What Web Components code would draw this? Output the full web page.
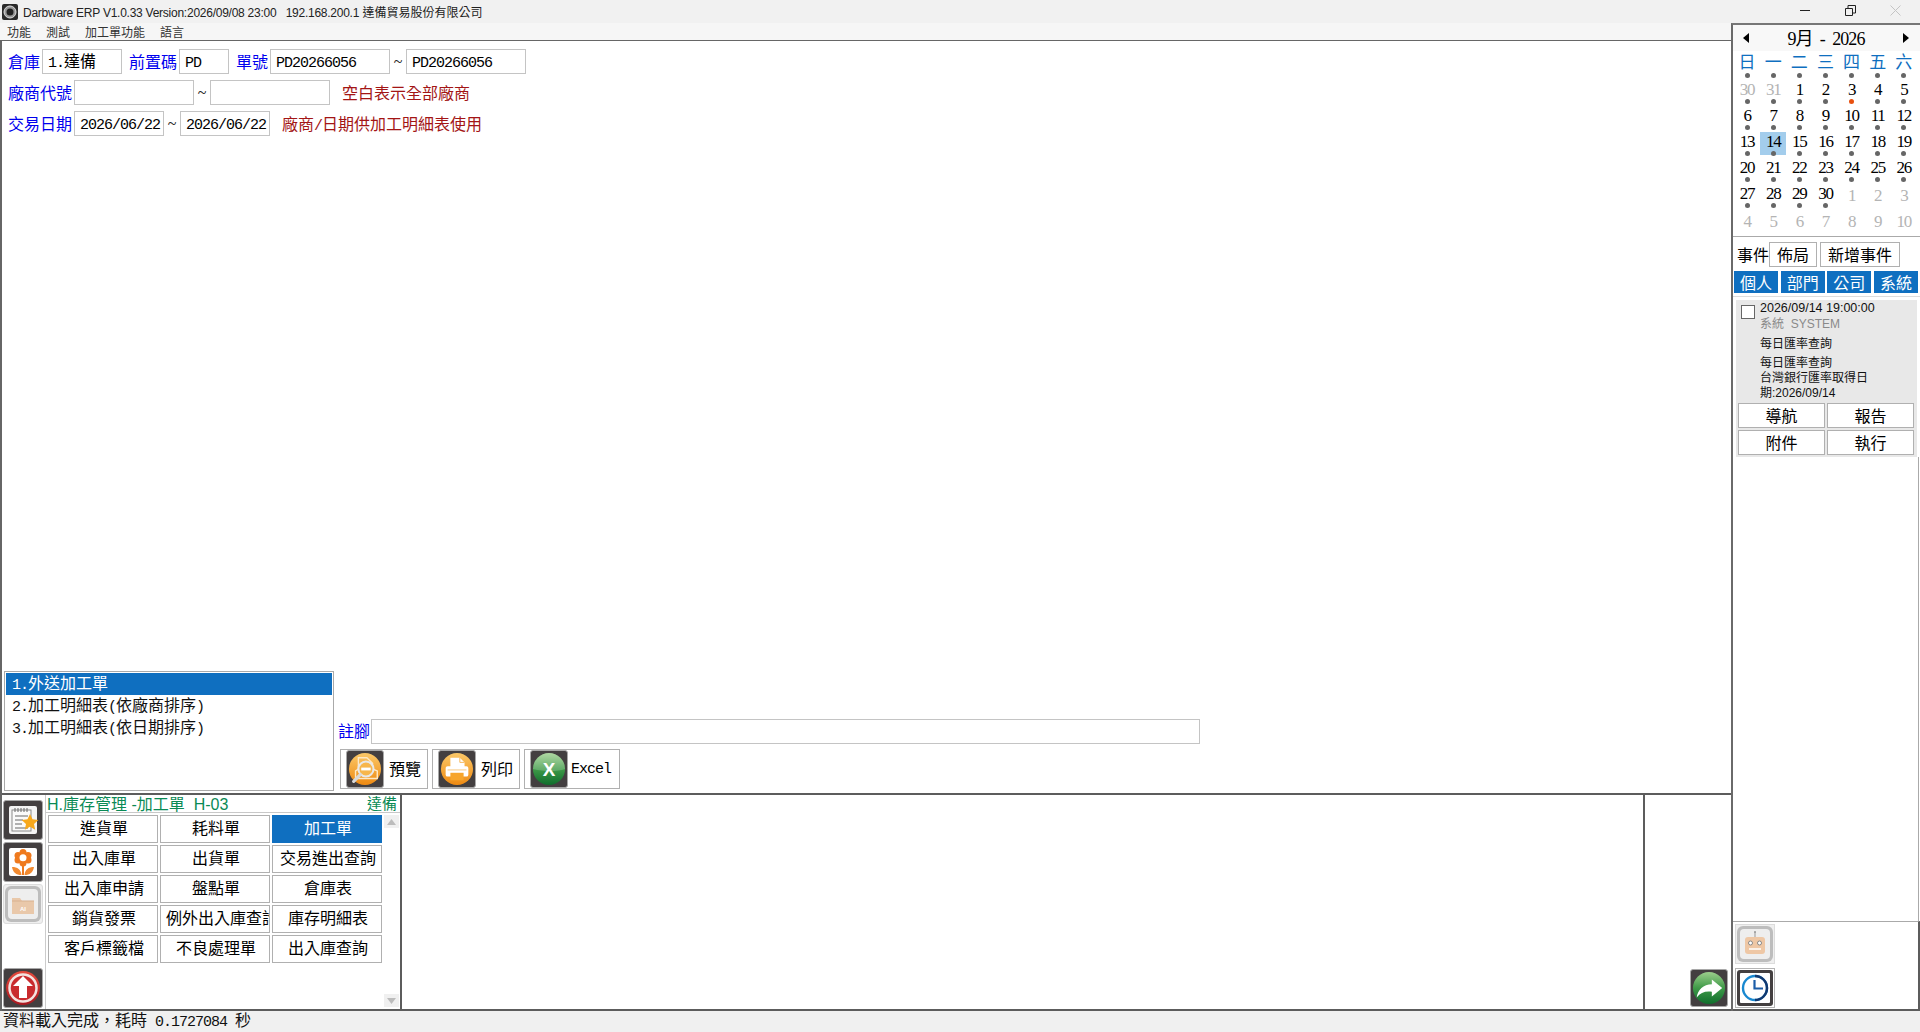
<!DOCTYPE html>
<html>
<head>
<meta charset="utf-8">
<style>
  html, body { margin: 0; padding: 0; height: 100%; background: #fff; overflow: hidden; }
  body { font-family: "Liberation Serif", "Noto Sans CJK TC", serif; }
</style>
</head>
<body>
<erp-app></erp-app>

<script>
const MING = `"Liberation Serif", "Noto Sans CJK TC", serif`;
const UI = `"Liberation Sans", "Noto Sans CJK TC", sans-serif`;

/* icon art, all in a 36x36 box */
const DEFS = `<defs>
  <linearGradient id="og" x1="0" y1="0" x2="0" y2="1"><stop offset="0" stop-color="#fbc868"/><stop offset="1" stop-color="#ee8a12"/></linearGradient>
  <linearGradient id="gg" x1="0" y1="0" x2="0" y2="1"><stop offset="0" stop-color="#9ccf8c"/><stop offset=".5" stop-color="#3f9a48"/><stop offset="1" stop-color="#0f6d2c"/></linearGradient>
  <linearGradient id="rg" x1="0" y1="0" x2="0" y2="1"><stop offset="0" stop-color="#e64a3c"/><stop offset="1" stop-color="#a81820"/></linearGradient>
</defs>`;

const ART = {
  note: `<rect x="4" y="4" width="28" height="28" rx="2" fill="#f4f4f4"/>
    <rect x="7" y="8" width="19" height="21" fill="#fafafa" stroke="#8a8a8a"/>
    <path d="M10 6v4M13 6v4M16 6v4M19 6v4M22 6v4" stroke="#666"/>
    <path d="M10 14h13M10 18h8M10 22h7M10 26h13" stroke="#999" stroke-width="1.400"/>
    <path d="M25 12l2.500 5.300 5.800.7-4.300 3.900 1.200 5.800-5.200-3-5.200 3 1.200-5.800-4.300-3.900 5.800-.7z" fill="#f7a81c"/>`,
  flower: `<rect x="4" y="4" width="28" height="28" rx="2" fill="#fff"/>
    <circle cx="18" cy="8.500" r="3.500" fill="#ef7a1e"/><circle cx="23" cy="11.500" r="3.500" fill="#ef7a1e"/><circle cx="23" cy="16" r="3.500" fill="#ef7a1e"/>
    <circle cx="18" cy="19" r="3.500" fill="#ef7a1e"/><circle cx="13" cy="16" r="3.500" fill="#ef7a1e"/><circle cx="13" cy="11.500" r="3.500" fill="#ef7a1e"/>
    <circle cx="18" cy="13.750" r="3.500" fill="#fff"/>
    <path d="M17 21h2v10h-2z" fill="#ef7a1e"/>
    <path d="M16.500 31c-5.500 0-8.500-2.500-9.500-8 5.500 0 9 2.500 9.500 8zM19.500 31c5.500 0 8.500-2.500 9.500-8-5.500 0-9 2.500-9.500 8z" fill="#f28a30"/>`,
  folder: `<rect x="0" y="0" width="36" height="36" rx="6" fill="#bdbdbd"/>
    <rect x="3" y="3" width="30" height="30" rx="4" fill="#eeeeee"/>
    <path d="M7 12h8l2 3h12v13H7z" fill="#e9c8aa"/>
    <path d="M7 15h22" stroke="#d8b190"/>
    <text x="15" y="25" font-family="Liberation Sans" font-size="6" font-weight="700" fill="#fff">AI</text>`,
  up: `<circle cx="18" cy="18" r="17" fill="url(#rg)"/>
    <circle cx="18" cy="18" r="13.500" fill="#c92b2e" stroke="#f3e3e0" stroke-width="2.500"/>
    <path d="M18 6l10 10h-6v12h-8V16H8z" fill="#fff"/>`,
  search: `<circle cx="18" cy="18" r="17" fill="url(#og)"/>
    <path d="M11 6h9l6 6v6l5 2v8H8v-8l3-2z" fill="none" stroke="#ffe9c4" stroke-width="1.500"/>
    <circle cx="19" cy="18" r="8" fill="#f7b64c" stroke="#e8e8e8" stroke-width="2.200"/>
    <path d="M14 18h10" stroke="#fff" stroke-width="3"/>
    <path d="M13 24l-7 7" stroke="#d9d9d9" stroke-width="3.400" stroke-linecap="round"/>`,
  print: `<circle cx="18" cy="18" r="17" fill="url(#og)"/>
    <path d="M11 6h10l5 5v6H11z" fill="#fff"/>
    <path d="M21 6v5h5" fill="none" stroke="#f6b655"/>
    <rect x="6" y="15" width="24" height="11" rx="2" fill="#fff"/>
    <rect x="11" y="22" width="14" height="8" fill="#f7a52a"/>
    <path d="M8 19h20" stroke="#f6c67a"/>`,
  excel: `<circle cx="18" cy="18" r="17" fill="url(#gg)"/>
    <path d="M1 18a17 17 0 0 1 34 0c-8 3-22 3-34 0z" fill="#fff" opacity=".2"/>
    <text x="18" y="25" text-anchor="middle" font-family="Liberation Sans" font-size="20" font-weight="700" fill="#fff">X</text>`,
  share: `<circle cx="18" cy="18" r="17" fill="url(#gg)"/>
    <path d="M21 9l11 9-11 9v-5c-7-1-12 1-16 6 1-8 7-14 16-14z" fill="#fff"/>`,
  clock: `<rect x="0" y="0" width="36" height="36" rx="3" fill="#433f40"/>
    <rect x="3" y="3" width="30" height="30" rx="1" fill="#fff"/>
    <circle cx="18" cy="18" r="12" fill="#fff" stroke="#1888d0" stroke-width="2.400"/>
    <path d="M18 6a12 12 0 0 1 0 24" fill="none" stroke="#12386f" stroke-width="2.400"/>
    <path d="M17.500 10v8.500H26" fill="none" stroke="#1c5da8" stroke-width="2.200"/>`,
  robot: `<rect x="0" y="0" width="36" height="36" rx="6" fill="#bdbdbd"/>
    <rect x="3" y="3" width="30" height="30" rx="4" fill="#eeeeee"/>
    <path d="M18 6v5" stroke="#999"/><circle cx="18" cy="6" r="1" fill="#999"/>
    <rect x="8" y="11" width="20" height="17" rx="3" fill="#eec7a5"/>
    <circle cx="13.500" cy="17" r="2" fill="#fff" stroke="#888"/><circle cx="22.500" cy="17" r="2" fill="#fff" stroke="#888"/>
    <path d="M12 23h12" stroke="#fff" stroke-width="1.500"/>`
};

/* half-width latin run, the form font keeps these at 8px a char */
class ErpA extends HTMLElement {
  constructor() {
    super();
    this.attachShadow({ mode: 'open' });
    this.shadowRoot.innerHTML = `<style>:host{ font:15px "Liberation Mono", monospace; letter-spacing:-1px; white-space:pre; }</style><slot></slot>`;
  }
}

class ErpTile extends HTMLElement {
  constructor() {
    super();
    this.attachShadow({ mode: 'open' });
    const kind = this.getAttribute('kind');
    const size = this.getAttribute('size') || 38;
    const faded = this.hasAttribute('faded');
    const square = this.hasAttribute('square');
    let bg = '#433f40', line = '#a8a8a8';
    if (faded) { bg = '#efefef'; line = '#dcdcdc'; }
    if (square && !faded) { bg = '#fff'; line = '#b4b4b4'; }
    this.shadowRoot.innerHTML = `
    <style>
      :host{ display:block; width:${size}px; height:${size}px; flex:none; box-sizing:border-box;
        border:1px solid ${line}; border-radius:${square ? 0 : 3}px; background:${bg}; padding:1px; }
      svg{ display:block; width:100%; height:100%; }
    </style>
    <svg viewBox="0 0 36 36">${DEFS}${ART[kind]}</svg>`;
  }
}

class ErpTitlebar extends HTMLElement {
  constructor() {
    super();
    this.attachShadow({ mode: 'open' });
    this.shadowRoot.innerHTML = `
    <style>
      :host{ display:flex; height:23px; flex:none; background:#f1f1f1; align-items:center; font:12px ${UI}; color:#222; }
      .logo{ width:16px; height:16px; margin:0 5px 0 2px; }
      .txt{ flex:1; white-space:pre; padding-bottom:1px; }
      .txt span{ letter-spacing:-.25px; }
      .btn{ width:45px; height:21px; display:flex; align-items:center; justify-content:center; }
      .btns{ display:flex; margin:0 2px 2px 0; }
    </style>
    <svg class="logo" viewBox="0 0 16 16">
      <rect width="16" height="16" rx="2" fill="#2a2a2a"/>
      <circle cx="8" cy="8" r="6" fill="#999" stroke="#ddd"/>
      <circle cx="8" cy="8" r="3.500" fill="#222"/>
    </svg>
    <div class="txt"><span>Darbware ERP V1.0.33 Version:2026/09/08 23:00   192.168.200.1</span> 達備貿易股份有限公司</div>
    <div class="btns">
      <div class="btn"><svg width="11" height="11"><path d="M0 5.500h10" stroke="#222"/></svg></div>
      <div class="btn"><svg width="11" height="11"><path d="M.5 3.500h7v7h-7zM3 3V.5h7.500V8H8" fill="none" stroke="#222"/></svg></div>
      <div class="btn"><svg width="11" height="11"><path d="M.5.500l10 10M10.500.500l-10 10" stroke="#c4c4c4"/></svg></div>
    </div>`;
  }
}

class ErpMenubar extends HTMLElement {
  constructor() {
    super();
    this.attachShadow({ mode: 'open' });
    this.shadowRoot.innerHTML = `
    <style>
      :host{ display:flex; height:17px; flex:none; background:#f6f6f6; align-items:center; gap:15px; padding-left:7px;
        font:12px ${UI}; color:#333; }
    </style>
    <slot></slot>`;
  }
}

class ErpField extends HTMLElement {
  constructor() {
    super();
    this.attachShadow({ mode: 'open' });
    this.shadowRoot.innerHTML = `
    <style>
      :host{ display:block; flex:none; box-sizing:border-box; height:25px; padding-left:5px;
        border:1px solid #c4c4c4; background:#fff; font:16px/23px ${MING}; color:#000; white-space:nowrap; }
    </style>
    <slot></slot>`;
  }
}

class ErpFilter extends HTMLElement {
  constructor() {
    super();
    this.attachShadow({ mode: 'open' });
    this.shadowRoot.innerHTML = `
    <style>
      :host{ display:flex; flex-direction:column; gap:6px; padding:8px 0 0 6px; font:16px ${MING}; }
      .row{ display:flex; align-items:center; height:25px; }
      .lb{ color:#0000ee; margin-right:2px; white-space:nowrap; padding-bottom:2px; }
      .lb.on{ margin-left:7px; }
      .til{ width:16px; text-align:center; color:#222; }
      .note{ color:#a31515; white-space:nowrap; margin-left:12px; padding-bottom:2px; }
    </style>
    <div class="row">
      <span class="lb">倉庫</span><erp-field style="width:80px"><erp-a>1.</erp-a>達備</erp-field>
      <span class="lb on">前置碼</span><erp-field style="width:50px"><erp-a>PD</erp-a></erp-field>
      <span class="lb on">單號</span><erp-field style="width:120px"><erp-a>PD20266056</erp-a></erp-field>
      <span class="til">~</span><erp-field style="width:120px"><erp-a>PD20266056</erp-a></erp-field>
    </div>
    <div class="row">
      <span class="lb">廠商代號</span><erp-field style="width:120px"></erp-field>
      <span class="til">~</span><erp-field style="width:120px"></erp-field>
      <span class="note">空白表示全部廠商</span>
    </div>
    <div class="row">
      <span class="lb">交易日期</span><erp-field style="width:90px"><erp-a>2026/06/22</erp-a></erp-field>
      <span class="til">~</span><erp-field style="width:90px"><erp-a>2026/06/22</erp-a></erp-field>
      <span class="note">廠商<erp-a>/</erp-a>日期供加工明細表使用</span>
    </div>`;
  }
}

class ErpReportList extends HTMLElement {
  constructor() {
    super();
    this.attachShadow({ mode: 'open' });
    this.shadowRoot.innerHTML = `
    <style>
      :host{ display:block; width:330px; height:120px; flex:none; box-sizing:border-box; padding:1px;
        border:1px solid #aaa; font:16px ${MING}; color:#111; }
      div{ height:22px; line-height:22px; padding-left:6px; white-space:nowrap; }
      .on{ background:#0f6fc0; color:#fff; }
    </style>
    <div class="on"><erp-a>1.</erp-a>外送加工單</div>
    <div><erp-a>2.</erp-a>加工明細表<erp-a>(</erp-a>依廠商排序<erp-a>)</erp-a></div>
    <div><erp-a>3.</erp-a>加工明細表<erp-a>(</erp-a>依日期排序<erp-a>)</erp-a></div>`;
  }
}

class ErpAction extends HTMLElement {
  constructor() {
    super();
    this.attachShadow({ mode: 'open' });
    const w = this.getAttribute('w');
    this.shadowRoot.innerHTML = `
    <style>
      :host{ display:flex; align-items:center; box-sizing:border-box; width:${w}px; height:40px; flex:none;
        border:1px solid #b0b0b0; padding-left:5px; gap:5px; font:16px ${MING}; color:#000; }
      span{ padding-bottom:2px; }
    </style>
    <erp-tile kind="${this.getAttribute('kind')}"></erp-tile><span><slot></slot></span>`;
  }
}

class ErpForm extends HTMLElement {
  constructor() {
    super();
    this.attachShadow({ mode: 'open' });
    this.shadowRoot.innerHTML = `
    <style>
      :host{ display:flex; flex-direction:column; flex:1; min-height:0; font:16px ${MING}; }
      .low{ margin-top:auto; display:flex; padding:0 0 2px 2px; gap:4px; }
      .side{ display:flex; flex-direction:column; justify-content:flex-end; gap:5px; padding-bottom:2px; }
      .rem{ display:flex; align-items:center; gap:1px; color:#0000ee; }
      .rem span{ padding-bottom:2px; }
      .acts{ display:flex; gap:4px; margin-left:2px; }
    </style>
    <erp-filter></erp-filter>
    <div class="low">
      <erp-report-list></erp-report-list>
      <div class="side">
        <div class="rem"><span>註腳</span><erp-field style="width:829px"></erp-field></div>
        <div class="acts">
          <erp-action w="88" kind="search">預覽</erp-action>
          <erp-action w="88" kind="print">列印</erp-action>
          <erp-action w="96" kind="excel"><erp-a style="margin-left:-2px">Excel</erp-a></erp-action>
        </div>
      </div>
    </div>`;
  }
}

class ErpModule extends HTMLElement {
  constructor() {
    super();
    this.attachShadow({ mode: 'open' });
    const names = ['進貨單','耗料單','加工單','出入庫單','出貨單','交易進出查詢','出入庫申請','盤點單','倉庫表',
      '銷貨發票','例外出入庫查詢','庫存明細表','客戶標籤檔','不良處理單','出入庫查詢'];
    this.shadowRoot.innerHTML = `
    <style>
      :host{ display:flex; flex-direction:column; width:355px; flex:none; box-sizing:border-box; border-left:1px solid #ccc; }
      .head{ display:flex; justify-content:space-between; align-items:center; height:18px; flex:none; box-sizing:border-box;
        border-bottom:1px solid #c8c8c8; padding:0 3px 2px 1px; font:16px ${UI}; color:#0a8a55; white-space:pre; }
      .head .r{ font-size:15px; }
      .body{ flex:1; display:flex; min-height:0; padding:2px 0 2px 2px; gap:2px; }
      .grid{ display:grid; grid-template-columns:repeat(3,110px); grid-auto-rows:28px; gap:2px; align-content:start; }
      .b{ box-sizing:border-box; border:1px solid #b0b0b0; padding:0 3px 0 5px; text-align:center;
        overflow:hidden; white-space:nowrap; font:16px/25px ${MING}; color:#000; }
      .b.on{ background:#0f6fc0; border-color:#0f6fc0; color:#fff; }
      .sb{ width:15px; display:flex; flex-direction:column; justify-content:space-between; }
      .arr{ height:13px; background:#f0f0f0; display:flex; align-items:center; justify-content:center; }
    </style>
    <div class="head"><span>H.庫存管理 -加工單  H-03</span><span class="r">達備</span></div>
    <div class="body">
      <div class="grid">${names.map(n => `<div class="b${n === '加工單' ? ' on' : ''}">${n}</div>`).join('')}</div>
      <div class="sb">
        <div class="arr"><svg width="9" height="6"><path d="M4.500 0l4.500 6H0z" fill="#bcbcbc"/></svg></div>
        <div class="arr"><svg width="9" height="6"><path d="M4.500 6L9 0H0z" fill="#bcbcbc"/></svg></div>
      </div>
    </div>`;
  }
}

class ErpDock extends HTMLElement {
  constructor() {
    super();
    this.attachShadow({ mode: 'open' });
    this.shadowRoot.innerHTML = `
    <style>
      :host{ display:flex; height:218px; flex:none; box-sizing:border-box; border-top:2px solid #5c5c5c; border-bottom:2px solid #5c5c5c; }
      .strip{ width:43px; flex:none; display:flex; flex-direction:column; gap:2px; padding:5px 0 1px 1px; box-sizing:border-box; }
      .strip .end{ margin-top:auto; }
      .mid{ flex:1; border-left:2px solid #5c5c5c; }
      .tail{ width:88px; flex:none; box-sizing:border-box; border-left:2px solid #5c5c5c; display:flex; align-items:flex-end; justify-content:flex-end; padding:0 3px 2px 0; }
    </style>
    <div class="strip">
      <erp-tile kind="note" size="40"></erp-tile>
      <erp-tile kind="flower" size="40"></erp-tile>
      <erp-tile kind="folder" size="40" faded></erp-tile>
      <erp-tile class="end" kind="up" size="40"></erp-tile>
    </div>
    <erp-module></erp-module>
    <div class="mid"></div>
    <div class="tail"><erp-tile kind="share"></erp-tile></div>`;
  }
}

class ErpCalendar extends HTMLElement {
  constructor() {
    super();
    this.attachShadow({ mode: 'open' });
    const week = ['日','一','二','三','四','五','六'];
    const days = [30,31,1,2,3,4,5,6,7,8,9,10,11,12,13,14,15,16,17,18,19,20,21,22,23,24,25,26,27,28,29,30,1,2,3,4,5,6,7,8,9,10];
    const cell = (n, i) => {
      const muted = i < 2 || i >= 32;
      const dot = i < 32;
      return `<div class="c${muted ? ' m' : ''}${i === 15 ? ' sel' : ''}${dot ? '' : ' last'}">${n}${dot ? `<i class="${i === 4 ? 'hot' : ''}"></i>` : ''}</div>`;
    };
    this.shadowRoot.innerHTML = `
    <style>
      :host{ display:block; flex:none; height:212px; box-sizing:border-box; border-bottom:1px solid #aaa; font:18px ${MING}; color:#000; }
      .top{ height:26px; background:#f8f8f8; display:flex; align-items:center; justify-content:space-between; padding:0 11px 0 10px; }
      .title{ white-space:pre; letter-spacing:-.9px; margin-top:-2px; }
      .g{ display:grid; grid-template-columns:repeat(7,26.14px); padding-left:1px; }
      .c{ position:relative; height:26px; line-height:25px; text-align:center; letter-spacing:-1.2px; font-size:17px; }
      .c.last{ line-height:30px; }
      .w{ color:#0f6fc0; font-size:17px; letter-spacing:0; line-height:24px; }
      .c i{ position:absolute; left:50%; margin-left:-2.500px; bottom:-1px; width:5px; height:5px; border-radius:50%; background:#666; }
      .c.m{ color:#b4b4b4; }
      .c.sel{ background:linear-gradient(#a3cdec,#a3cdec) 0 3px / 100% 25px no-repeat; }
      .c i.hot{ background:#e8500f; }
    </style>
    <div class="top">
      <svg width="7" height="10"><path d="M6 0v10L0 5z" fill="#000"/></svg>
      <span class="title">9月  -  2026</span>
      <svg width="7" height="10"><path d="M1 0v10l6-5z" fill="#000"/></svg>
    </div>
    <div class="g">${week.map(w => `<div class="c w">${w}<i></i></div>`).join('')}</div>
    <div class="g">${days.map(cell).join('')}</div>`;
  }
}

class ErpEvents extends HTMLElement {
  constructor() {
    super();
    this.attachShadow({ mode: 'open' });
    this.shadowRoot.innerHTML = `
    <style>
      :host{ display:block; flex:none; font:16px ${MING}; color:#000; }
      .bar{ display:flex; align-items:center; height:25px; margin-top:5px; padding-left:4px; }
      .bar span{ padding-bottom:2px; }
      .btn{ box-sizing:border-box; height:25px; border:1px solid #b0b0b0; padding-bottom:2px; display:flex; align-items:center; justify-content:center; }
      .tabs{ display:flex; gap:2.670px; margin:4px 2px 0 1px; height:22px; }
      .tabs div{ background:#0f6fc0; color:#fff; flex:1; display:flex; align-items:center; justify-content:center; padding-bottom:1px; }
      .card{ margin:3px 0 0 0; border-top:1px solid #ddd; }
      .in{ background:#e8e8e8; margin:3px 3px 0 3px; height:157px; box-sizing:border-box; padding:5px 0 2px 2px; display:flex; flex-direction:column; }
      .ev{ display:flex; flex:1; }
      .ck{ width:14px; height:14px; box-sizing:border-box; border:1px solid #666; background:#fff; margin:0 5px 0 3px; flex:none; }
      .tx{ font:12px/15px ${UI}; color:#111; }
      .tx .when{ font-size:12.500px; margin-top:-4px; }
      .tx .who{ color:#8a8a8a; margin-bottom:4px; line-height:17px; }
      .tx .t1{ margin-bottom:4px; }
      .acts{ display:grid; grid-template-columns:87px 87px; grid-auto-rows:25px; gap:2px; }
      .acts .btn{ background:#fff; }
    </style>
    <div class="bar">
      <span>事件</span>
      <div class="btn" style="width:48px">佈局</div>
      <div class="btn" style="width:80px;margin-left:3px">新增事件</div>
    </div>
    <div class="tabs"><div>個人</div><div>部門</div><div>公司</div><div>系統</div></div>
    <div class="card">
      <div class="in">
        <div class="ev">
          <div class="ck"></div>
          <div class="tx">
            <div class="when">2026/09/14 19:00:00</div>
            <div class="who">系統&nbsp; SYSTEM</div>
            <div class="t1">每日匯率查詢</div>
            <div>每日匯率查詢</div>
            <div>台灣銀行匯率取得日</div>
            <div>期:2026/09/14</div>
          </div>
        </div>
        <div class="acts">
          <div class="btn">導航</div><div class="btn">報告</div>
          <div class="btn">附件</div><div class="btn">執行</div>
        </div>
      </div>
    </div>`;
  }
}

class ErpSidebar extends HTMLElement {
  constructor() {
    super();
    this.attachShadow({ mode: 'open' });
    this.shadowRoot.innerHTML = `
    <style>
      :host{ display:flex; flex-direction:column; width:189px; flex:none; box-sizing:border-box;
        border-top:2px solid #777; border-left:2px solid #6a6a6a; }
      .fill{ flex:1; border-right:1px solid #aaa; margin-right:1px; }
      .foot{ flex:none; height:90px; box-sizing:border-box; border-top:1px solid #aaa; border-bottom:2px solid #5c5c5c;
        border-right:2px solid #5c5c5c; padding:2px 0 0 2px; display:flex; flex-direction:column; gap:4px; }
    </style>
    <erp-calendar></erp-calendar>
    <erp-events></erp-events>
    <div class="fill"></div>
    <div class="foot">
      <erp-tile kind="robot" size="40" faded square></erp-tile>
      <erp-tile kind="clock" size="40" square></erp-tile>
    </div>`;
  }
}

class ErpStatus extends HTMLElement {
  constructor() {
    super();
    this.attachShadow({ mode: 'open' });
    this.shadowRoot.innerHTML = `
    <style>
      :host{ display:block; height:21px; flex:none; box-sizing:border-box; background:#f0f0f0; padding:0 0 0 3px; font:16px/19px ${MING}; color:#111; white-space:nowrap; }
    </style>
    <slot></slot>`;
  }
}

class ErpApp extends HTMLElement {
  constructor() {
    super();
    this.attachShadow({ mode: 'open' });
    this.shadowRoot.innerHTML = `
    <style>
      :host{ display:flex; flex-direction:column; height:1032px; width:1920px; overflow:hidden; }
      .work{ display:flex; flex:1; min-height:0; }
      .left{ flex:1; min-width:0; display:flex; flex-direction:column; }
      .pane{ flex:1; min-height:0; display:flex; flex-direction:column; box-sizing:border-box;
        border-left:2px solid #666; border-top:1px solid #666; }
    </style>
    <erp-titlebar></erp-titlebar>
    <div class="work">
      <div class="left">
        <erp-menubar><span>功能</span><span>測試</span><span>加工單功能</span><span>語言</span></erp-menubar>
        <div class="pane">
          <erp-form></erp-form>
          <erp-dock></erp-dock>
        </div>
      </div>
      <erp-sidebar></erp-sidebar>
    </div>
    <erp-status>資料載入完成，耗時<erp-a> 0.1727084 </erp-a>秒</erp-status>`;
  }
}

customElements.define('erp-a', ErpA);
customElements.define('erp-tile', ErpTile);
customElements.define('erp-titlebar', ErpTitlebar);
customElements.define('erp-menubar', ErpMenubar);
customElements.define('erp-field', ErpField);
customElements.define('erp-filter', ErpFilter);
customElements.define('erp-report-list', ErpReportList);
customElements.define('erp-action', ErpAction);
customElements.define('erp-form', ErpForm);
customElements.define('erp-module', ErpModule);
customElements.define('erp-dock', ErpDock);
customElements.define('erp-calendar', ErpCalendar);
customElements.define('erp-events', ErpEvents);
customElements.define('erp-sidebar', ErpSidebar);
customElements.define('erp-status', ErpStatus);
customElements.define('erp-app', ErpApp);
</script>
</body>
</html>
